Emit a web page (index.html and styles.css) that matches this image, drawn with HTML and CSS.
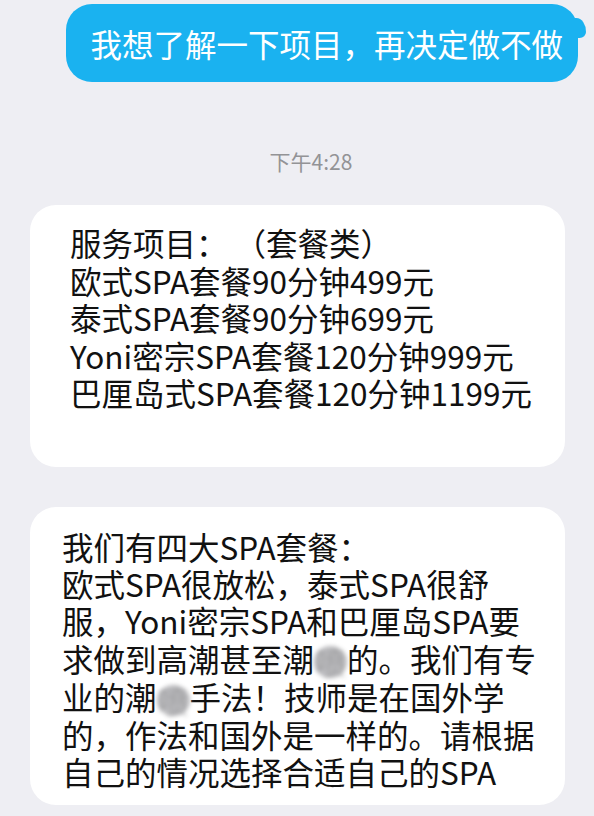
FILE: index.html
```html
<!DOCTYPE html>
<html lang="zh-CN">
<head>
  <meta charset="UTF-8" />
  <meta name="viewport" content="width=device-width, initial-scale=1.0"/>
  <title>聊天记录</title>
  <link rel="stylesheet" href="styles.css">
</head>
<body>

  <!-- Chat thread -->
  <div class="chat">
    <div class="bubble bubble-out">我想了解一下项目，再决定做不做</div>

    <div class="time">下午4:28</div>

    <div class="bubble bubble-in menu">
      服务项目：&nbsp;（套餐类）<br>
      欧式SPA套餐90分钟499元<br>
      泰式SPA套餐90分钟699元<br>
      Yoni密宗SPA套餐120分钟999元<br>
      巴厘岛式SPA套餐120分钟1199元
    </div>

    <div class="bubble bubble-in intro">
      我们有四大SPA套餐：<br>
      欧式SPA很放松，泰式SPA很舒<br>
      服，Yoni密宗SPA和巴厘岛SPA要<br>
      求做到高潮甚至潮<span class="masked">喷</span>的。我们有专<br>
      业的潮<span class="masked">喷</span>手法！技师是在国外学<br>
      的，作法和国外是一样的。请根据<br>
      自己的情况选择合适自己的SPA
    </div>
  </div>

</body>
</html>
```

FILE: styles.css
```css
body {
  margin: 0;
  background: #eeeef3;
  font-family: "Noto Sans CJK SC", "Noto Sans", sans-serif;
  color: #111;
}

.chat {
  display: flex;
  flex-direction: column;
  padding-top: 4px;
}

.bubble {
  font-size: 31.5px;
  border-radius: 26px;
  box-sizing: border-box;
  white-space: nowrap;
}

.bubble-out {
  position: relative;
  align-self: flex-end;
  margin-right: 16px;
  background: #1ab2f0;
  color: #fff;
  line-height: 40px;
  padding: 19px 15px 19px 24px;
}

/* little tail on the top right */
.bubble-out::after {
  content: "";
  position: absolute;
  right: -8px;
  top: 14px;
  width: 16px;
  height: 20px;
  background: #1ab2f0;
  border-radius: 0 60% 40% 0 / 0 70% 30% 0;
}

.time {
  margin-top: 67px;
  padding-left: 28px;
  text-align: center;
  font-size: 21px;
  line-height: 24px;
  color: #939396;
}

.bubble-in {
  margin-left: 30px;
  width: 535px;
  background: #fff;
}

.menu {
  margin-top: 32px;
  height: 262px;
  line-height: 37.5px;
  padding: 19px 0 0 40px;
}

.intro {
  margin-top: 40px;
  height: 298px;
  line-height: 37.2px;
  padding: 21px 0 0 32px;
}

.masked {
  display: inline-block;
  width: 1.05em;
  height: 1em;
  vertical-align: -0.12em;
  background: #bcbcbf;
  border-radius: 50%;
  color: rgba(0, 0, 0, 0.15);
  filter: blur(2px);
  line-height: 1em;
  text-align: center;
}
```
